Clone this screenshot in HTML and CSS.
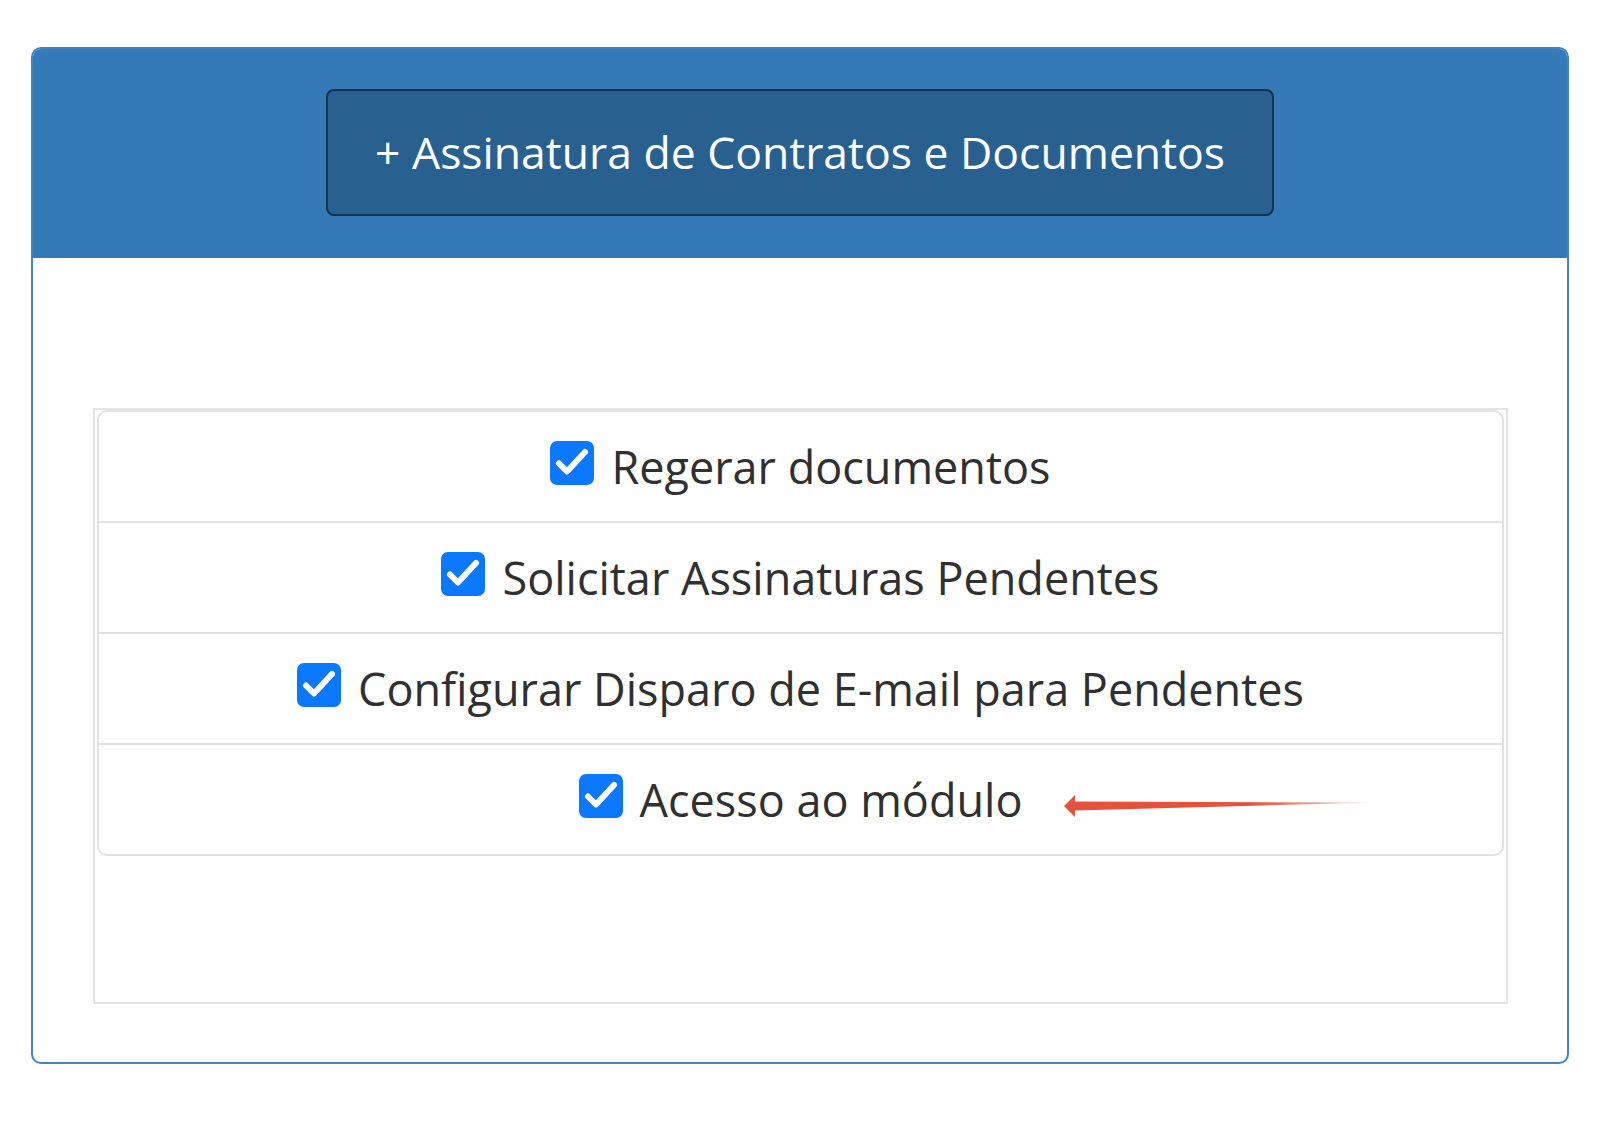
FILE: index.html
```html
<!DOCTYPE html>
<html lang="pt-BR">
<head>
<meta charset="utf-8">
<title>Assinatura de Contratos e Documentos</title>
<link rel="stylesheet" href="styles.css">
</head>
<body>
<div class="page">
  <section class="panel">
    <header class="panel-heading">
      <button class="btn-module" type="button">+ Assinatura de Contratos e Documentos</button>
    </header>
    <div class="panel-body">
      <div class="perm-box">
        <ul class="perm-list">
          <li class="perm-item">
            <label class="perm">
              <span class="check"><svg viewBox="0 0 44 44" width="44" height="44"><rect x="0" y="0" width="44" height="44" rx="7" fill="#0a78ff"/><path d="M9 22.5 L17 30.5 L35 11" fill="none" stroke="#fff" stroke-width="6" stroke-linecap="round" stroke-linejoin="round"/></svg></span>
              <span class="perm-text">Regerar documentos</span>
            </label>
          </li>
          <li class="perm-item">
            <label class="perm">
              <span class="check"><svg viewBox="0 0 44 44" width="44" height="44"><rect x="0" y="0" width="44" height="44" rx="7" fill="#0a78ff"/><path d="M9 22.5 L17 30.5 L35 11" fill="none" stroke="#fff" stroke-width="6" stroke-linecap="round" stroke-linejoin="round"/></svg></span>
              <span class="perm-text">Solicitar Assinaturas Pendentes</span>
            </label>
          </li>
          <li class="perm-item">
            <label class="perm">
              <span class="check"><svg viewBox="0 0 44 44" width="44" height="44"><rect x="0" y="0" width="44" height="44" rx="7" fill="#0a78ff"/><path d="M9 22.5 L17 30.5 L35 11" fill="none" stroke="#fff" stroke-width="6" stroke-linecap="round" stroke-linejoin="round"/></svg></span>
              <span class="perm-text">Configurar Disparo de E-mail para Pendentes</span>
            </label>
          </li>
          <li class="perm-item">
            <label class="perm">
              <span class="check"><svg viewBox="0 0 44 44" width="44" height="44"><rect x="0" y="0" width="44" height="44" rx="7" fill="#0a78ff"/><path d="M9 22.5 L17 30.5 L35 11" fill="none" stroke="#fff" stroke-width="6" stroke-linecap="round" stroke-linejoin="round"/></svg></span>
              <span class="perm-text">Acesso ao módulo</span>
              <svg class="arrow" viewBox="0 0 312 30" width="312" height="30">
                <defs>
                  <linearGradient id="fade" x1="0" y1="0" x2="1" y2="0">
                    <stop offset="0" stop-color="#e4513c"/>
                    <stop offset="0.6" stop-color="#e4513c"/>
                    <stop offset="1" stop-color="#e4513c" stop-opacity="0.2"/>
                  </linearGradient>
                </defs>
                <polygon points="3,15 14,4 14,10.5 310,11.5 14,19.5 14,26" fill="url(#fade)"/>
              </svg>
            </label>
          </li>
        </ul>
      </div>
    </div>
  </section>
</div>
</body>
</html>
```

FILE: styles.css
```css
html, body {
  margin: 0;
  background: #ffffff;
}

body {
  font-family: "Open Sans", "Noto Sans", sans-serif;
}

.page {
  padding: 47px 48px 0 31px;
}

.panel {
  border: 2px solid #4285c2;
  border-radius: 10px;
  overflow: hidden;
  background: #ffffff;
  box-shadow: 0 2px 3px rgba(0, 0, 0, 0.06);
}

.panel-heading {
  background: #337ab7;
  padding: 40px 0 42px;
  display: flex;
  justify-content: center;
}

.btn-module {
  height: 127px;
  padding: 0 47px;
  font-family: "Open Sans", "Noto Sans", sans-serif;
  font-size: 44.5px;
  line-height: 1;
  color: #ffffff;
  background: #286090;
  border: 2px solid #17324d;
  border-radius: 8px;
  cursor: pointer;
}

.panel-body {
  padding: 150px 59px 58px 60px;
}

.perm-box {
  border: 2px solid #e4e4e4;
  padding: 0 2px 146px;
}

.perm-list {
  list-style: none;
  margin: 0;
  padding: 0;
  border: 2px solid #e2e2e2;
  border-radius: 10px;
}

.perm-item {
  height: 109px;
  display: flex;
  align-items: center;
  justify-content: center;
  border-top: 2px solid #e2e2e2;
}

.perm-item:first-child {
  border-top: none;
}

.perm {
  position: relative;
  display: flex;
  align-items: center;
  gap: 17px;
  margin-bottom: 7px;
  font-size: 45px;
  line-height: 1;
  color: #303030;
}

.check {
  display: block;
  width: 44px;
  height: 44px;
}

.check svg {
  display: block;
}

.perm-text {
  display: block;
  margin-top: 6px;
}

.arrow {
  position: absolute;
  left: 100%;
  top: 20px;
  margin-left: 39px;
}
```
